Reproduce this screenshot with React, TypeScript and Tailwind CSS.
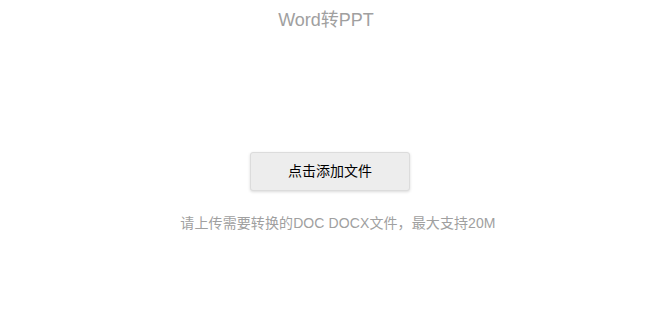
export default function App() {
  return (
    <div className="w-[658px] h-[330px] bg-white flex flex-col items-center" style={{ fontFamily: '"Liberation Sans", "Noto Sans CJK SC", sans-serif' }}>
      <h1 className="mt-[8px] mr-[6px] h-[24px] leading-[24px] text-[18px] text-[#a0a0a0] font-normal">Word转PPT</h1>
      <button className="mt-[120px] ml-[2px] w-[160px] h-[39px] bg-[#ededed] border border-[#dcdcdc] rounded-[3px] shadow-[0_1px_3px_rgba(0,0,0,0.15)] text-[14px] text-black">
        点击添加文件
      </button>
      <p className="mt-[22px] ml-[18px] text-[14px] leading-[20px] tracking-[0.1px] text-[#a0a0a0]">请上传需要转换的DOC DOCX文件，最大支持20M</p>
    </div>
  );
}
